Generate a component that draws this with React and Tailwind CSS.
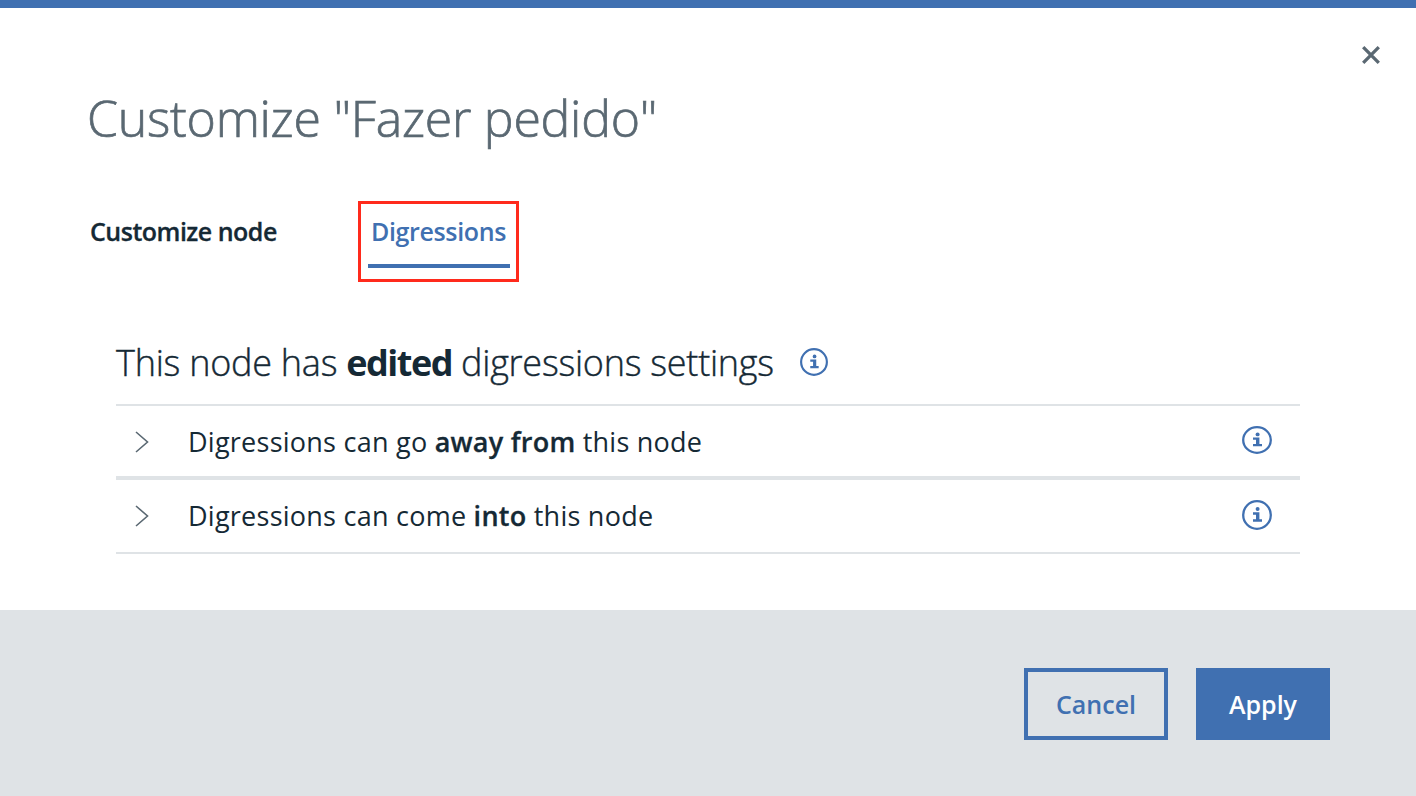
function InfoIcon({ className }) {
  return (
    <svg viewBox="0 0 30 30" preserveAspectRatio="none" fill="none" className={className} aria-hidden="true">
      <circle cx="15" cy="15" r="13.8" stroke="#4070b1" strokeWidth="2.3" />
      <circle cx="15.6" cy="9" r="2" fill="#4070b1" />
      <path d="M11 12.2h6.4v7H20V21.8h-9v-2.5h3v-4.6h-3z" fill="#4070b1" />
    </svg>
  );
}

function Row({ children, className, iconClass }) {
  return (
    <div className={"flex items-center border-[#dfe3e6] " + className}>
      <svg viewBox="0 0 14 22" fill="none" className="ml-[19px] h-[22px] w-[14px]" aria-hidden="true">
        <path d="M1 1l11.5 10L1 21" stroke="#5a6872" strokeWidth="1.6" />
      </svg>
      <p className="ml-[39px] flex-1 text-[27px] leading-[40px] tracking-[0.25px] whitespace-pre">{children}</p>
      <InfoIcon className={"mr-7 w-[30px] " + iconClass} />
    </div>
  );
}

export default function App() {
  return (
    <div className="flex h-[796px] w-[1416px] flex-col overflow-hidden border-t-8 border-[#4070b1] bg-white font-['Open_Sans',sans-serif] text-[#152935]">
      <header className="flex h-[193px] items-start justify-between">
        <h1 className="mt-[76px] ml-[87px] text-[50px] leading-[68px] font-light tracking-[-0.25px] text-[#5a6872] [-webkit-text-stroke:0.7px_#5a6872]">
          Customize "Fazer pedido"
        </h1>
        <button className="mt-[38px] mr-9" aria-label="Close">
          <svg viewBox="0 0 18 18" className="h-[18px] w-[18px]" fill="none">
            <path d="M1.2 1.2l15.6 15.6M16.8 1.2L1.2 16.8" stroke="#5a6872" strokeWidth="3.3" />
          </svg>
        </button>
      </header>
      <nav className="flex h-[81px] items-start text-[25px] leading-[32px] font-semibold">
        <button className="mt-[14px] ml-[90px] w-[268px] text-left tracking-[-0.5px] [-webkit-text-stroke:0.3px_#152935]">
          Customize node
        </button>
        <div className="h-[81px] w-[161px] border-[3px] border-[#ff2a1c] pl-[7px]">
          <button className="h-[64px] w-[142px] border-b-4 border-[#4070b1] pr-[1px] pb-[7px] tracking-[-0.35px] text-[#4070b1]">
            Digressions
          </button>
        </div>
      </nav>
      <main className="flex h-[328px] flex-col px-[116px] pt-[54px]">
        <div className="flex h-[68px] items-start">
          <h2 className="w-[658px] text-[36px] leading-[54px] font-light tracking-[-0.25px] whitespace-pre [-webkit-text-stroke:0.4px_#152935]">
            This node has <b className="font-bold tracking-[-1.5px] [-webkit-text-stroke:0px]">edited</b> digressions settings
          </h2>
          <InfoIcon className="mt-[12px] ml-[26px] h-7 w-7" />
        </div>
        <Row className="h-[72px] border-t-2 pt-[2px]" iconClass="-mt-1 h-7">
          Digressions can go <b className="font-semibold [-webkit-text-stroke:0.3px_#152935]">away from</b> this node
        </Row>
        <Row className="h-[78px] border-t-4 border-b-2" iconClass="-mt-[2px] h-[30px]">
          Digressions can come <b className="font-semibold [-webkit-text-stroke:0.3px_#152935]">into</b> this node
        </Row>
      </main>
      <footer className="flex flex-1 items-start justify-end gap-7 bg-[#dfe3e6] pt-[58px] pr-[86px] text-[25px] font-semibold">
        <button className="h-[72px] w-[144px] border-4 border-[#4070b1] pt-[2px] text-[#4070b1]">Cancel</button>
        <button className="h-[72px] w-[134px] bg-[#4070b1] pt-[2px] text-white">Apply</button>
      </footer>
    </div>
  );
}
